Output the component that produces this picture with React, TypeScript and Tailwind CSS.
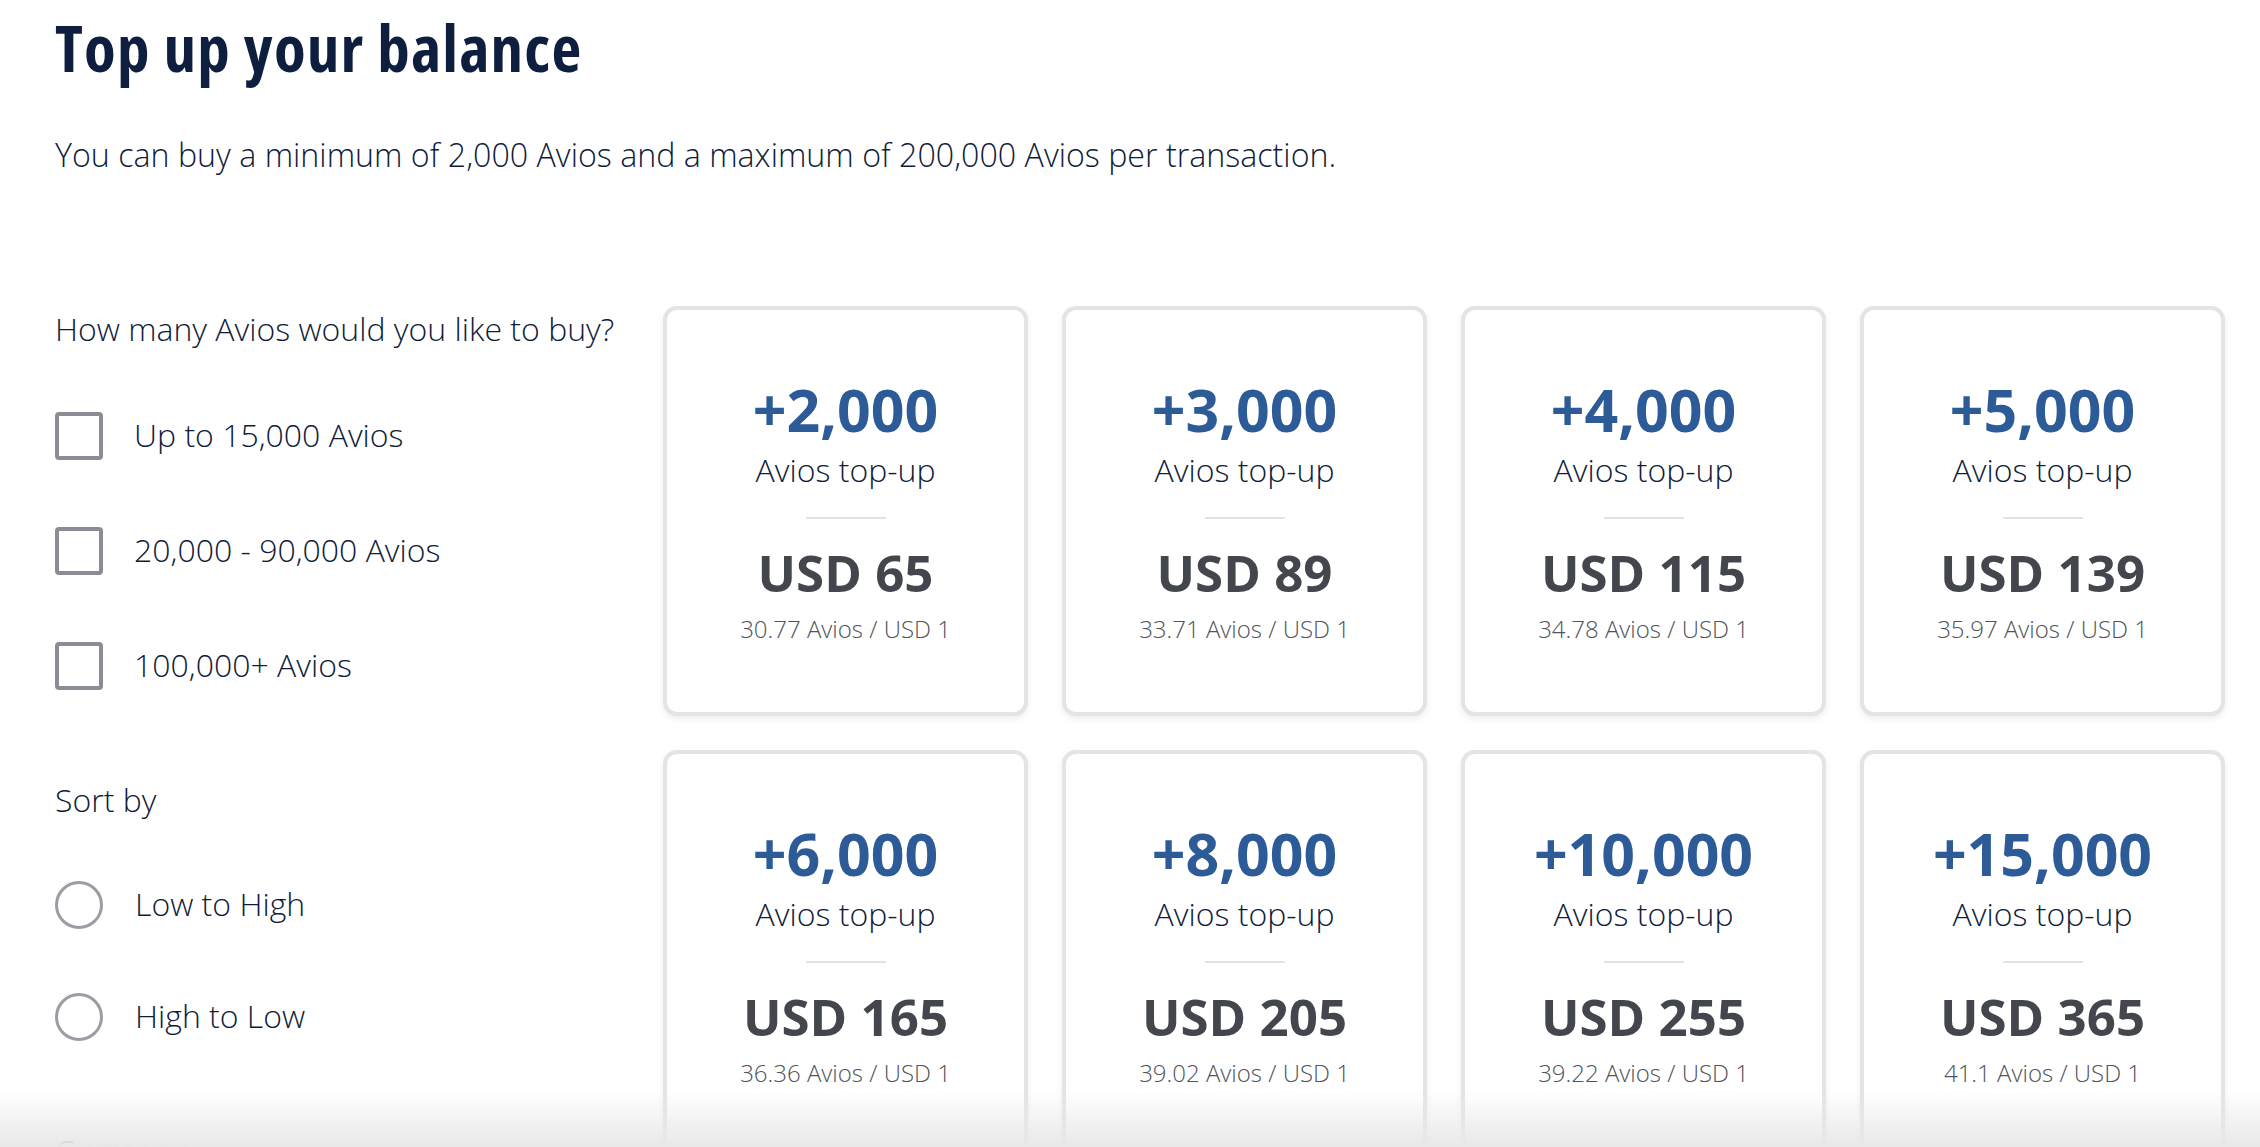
import React from "react";

type Offer = { avios: string; price: string; rate: string };

const offers: Offer[] = [
  { avios: "+2,000", price: "USD 65", rate: "30.77 Avios / USD 1" },
  { avios: "+3,000", price: "USD 89", rate: "33.71 Avios / USD 1" },
  { avios: "+4,000", price: "USD 115", rate: "34.78 Avios / USD 1" },
  { avios: "+5,000", price: "USD 139", rate: "35.97 Avios / USD 1" },
  { avios: "+6,000", price: "USD 165", rate: "36.36 Avios / USD 1" },
  { avios: "+8,000", price: "USD 205", rate: "39.02 Avios / USD 1" },
  { avios: "+10,000", price: "USD 255", rate: "39.22 Avios / USD 1" },
  { avios: "+15,000", price: "USD 365", rate: "41.1 Avios / USD 1" },
];

function Card({ o }: { o: Offer }) {
  return (
    <div className="h-[410px] w-[365px] rounded-[14px] border-[4px] border-[#e4e4e6] bg-white shadow-[0_3px_6px_rgba(0,0,0,0.07)] flex flex-col items-center pt-[67px]">
      <div className="text-[59px] leading-[64px] font-bold text-[#2d5b98]">{o.avios}</div>
      <div className="mt-[9px] text-[32px] leading-[40px] font-light text-[#0f1d3a]">Avios top-up</div>
      <div className="mt-[27px] h-[2px] w-[80px] bg-[#e3e3e3]" />
      <div className="mt-[25px] text-[51px] leading-[56px] font-bold text-[#43464d]">{o.price}</div>
      <div className="mt-[13px] text-[24px] leading-[32px] font-light text-[#50545b]">{o.rate}</div>
    </div>
  );
}

function Checkbox({ label }: { label: string }) {
  return (
    <div className="flex items-center h-[48px]">
      <div className="w-[48px] h-[48px] rounded-[4px] border-[4px] border-[#8a8d95] bg-white shrink-0" />
      <span className="ml-[31px] text-[32px] leading-[1.4] font-light text-[#0f1d3a]">{label}</span>
    </div>
  );
}

function Radio({ label }: { label: string }) {
  return (
    <div className="flex items-center h-[48px]">
      <div className="w-[48px] h-[48px] rounded-full border-[3px] border-[#9a9da5] bg-white shrink-0" />
      <span className="ml-[32px] text-[32px] leading-[1.4] font-light text-[#0f1d3a]">{label}</span>
    </div>
  );
}

export default function App() {
  return (
    <div
      className="relative h-[1147px] w-full overflow-hidden bg-white"
      style={{ fontFamily: '"Open Sans", "Noto Sans", sans-serif' }}
    >
      <div className="pl-[55px] pt-[15px]">
        <h1 className="text-[65px] leading-none font-bold text-[#0e1e3f] [font-stretch:81%] tracking-[1.2px]">
          Top up your balance
        </h1>
        <p className="mt-[52px] text-[32.2px] leading-[1.4] font-light text-[#0f1d3a]">
          You can buy a minimum of 2,000 Avios and a maximum of 200,000 Avios per transaction.
        </p>

        <div className="mt-[129px] flex items-start">
          <aside className="w-[608px] shrink-0 pt-[1px]">
            <div className="text-[32px] leading-[1.4] font-light text-[#0f1d3a]">
              How many Avios would you like to buy?
            </div>
            <div className="mt-[60px] flex flex-col gap-[67px]">
              <Checkbox label="Up to 15,000 Avios" />
              <Checkbox label="20,000 - 90,000 Avios" />
              <Checkbox label="100,000+ Avios" />
            </div>
            <div className="mt-[88px] text-[32px] leading-[1.4] font-light text-[#0f1d3a]">Sort by</div>
            <div className="mt-[58px] flex flex-col gap-[64px]">
              <Radio label="Low to High" />
              <Radio label="High to Low" />
            </div>
            <div className="mt-[88px] text-[32px] leading-[1.4] font-light text-[#0f1d3a]">Currency</div>
          </aside>

          <div className="grid grid-cols-[repeat(4,365px)] content-start gap-[34px]">
            {offers.map((o) => (
              <Card key={o.avios} o={o} />
            ))}
          </div>
        </div>
      </div>

      <div className="pointer-events-none absolute bottom-0 left-0 right-0 h-[56px] bg-gradient-to-b from-white/0 to-[#e8e8e8]" />
    </div>
  );
}
